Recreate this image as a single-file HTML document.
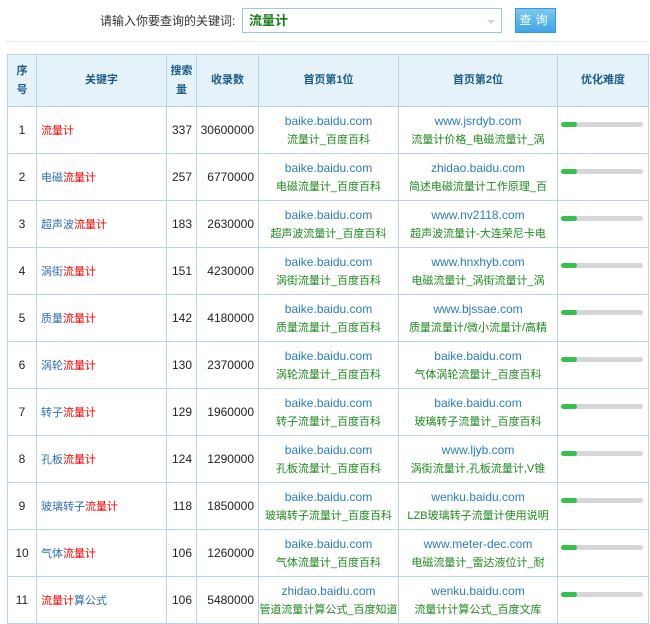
<!DOCTYPE html>
<html><head><meta charset="utf-8"><style>
body{margin:0;width:650px;height:615px;overflow:hidden;background:#fff;font-family:"Liberation Sans","Noto Sans CJK SC",sans-serif;font-size:12px;color:#222;position:relative}
.lbl{position:absolute;left:100px;top:12px;font-size:12px;color:#333}
.inp{position:absolute;left:242px;top:8px;width:260px;height:25px;border:1px solid #9cc7e4;box-sizing:border-box;font-weight:bold;color:#1a7a1a;font-size:13px;line-height:23px;padding-left:6px}
.inp:after{content:"";position:absolute;right:6px;top:11px;border:4px solid transparent;border-top:4px solid #c8d4dc}
.btn{position:absolute;left:515px;top:8px;width:41px;height:25px;background:linear-gradient(#7cc8f0,#3ea6e4);border:1px solid #3a98d4;box-sizing:border-box;color:#fff;text-align:center;line-height:23px;font-size:12px;letter-spacing:4px}
.hr{position:absolute;left:6px;top:41px;width:642px;height:1px;background:#e4e8ea}
table{position:absolute;left:7px;top:54px;border-collapse:collapse;table-layout:fixed;width:641px}
td,th{border:1px solid #b7d5e6;padding:0}
th{background:#e6f2fa;color:#1a5a8a;font-size:11px;font-weight:bold;height:51px;line-height:19px}
td{height:46px;text-align:center}
td.k{text-align:left;padding-left:4px;color:#2a6fb5;font-size:11px}
.r{color:#f00}
td.n{text-align:right;padding-right:4px}
.u{color:#2a7cc0;font-size:12px;line-height:20px}
.t{color:#1e8a1e;font-size:11px;line-height:18px;white-space:nowrap;overflow:hidden}
.bar{width:82px;height:5px;background:#d6d6d6;border-radius:3px;margin:0 0 0 3px;position:relative;top:-6px}
.bar i{display:block;width:16px;height:5px;background:#33c24d;border-radius:3px}
</style></head><body>
<div class="lbl">请输入你要查询的关键词:</div>
<div class="inp">流量计</div>
<div class="btn">查询</div>
<div class="hr"></div>
<table>
<colgroup><col style="width:29px"><col style="width:130px"><col style="width:30px"><col style="width:62px"><col style="width:140px"><col style="width:159px"><col style="width:91px"></colgroup>
<tr><th>序<br>号</th><th>关键字</th><th>搜索<br>量</th><th>收录数</th><th>首页第1位</th><th>首页第2位</th><th>优化难度</th></tr>
<tr><td>1</td><td class="k"><span class="r">流量计</span></td><td class="n">337</td><td class="n">30600000</td><td><div class="u">baike.baidu.com</div><div class="t">流量计_百度百科</div></td><td><div class="u">www.jsrdyb.com</div><div class="t">流量计价格_电磁流量计_涡</div></td><td><div class="bar"><i></i></div></td></tr>
<tr><td>2</td><td class="k">电磁<span class="r">流量计</span></td><td class="n">257</td><td class="n">6770000</td><td><div class="u">baike.baidu.com</div><div class="t">电磁流量计_百度百科</div></td><td><div class="u">zhidao.baidu.com</div><div class="t">简述电磁流量计工作原理_百</div></td><td><div class="bar"><i></i></div></td></tr>
<tr><td>3</td><td class="k">超声波<span class="r">流量计</span></td><td class="n">183</td><td class="n">2630000</td><td><div class="u">baike.baidu.com</div><div class="t">超声波流量计_百度百科</div></td><td><div class="u">www.nv2118.com</div><div class="t">超声波流量计-大连荣尼卡电</div></td><td><div class="bar"><i></i></div></td></tr>
<tr><td>4</td><td class="k">涡街<span class="r">流量计</span></td><td class="n">151</td><td class="n">4230000</td><td><div class="u">baike.baidu.com</div><div class="t">涡街流量计_百度百科</div></td><td><div class="u">www.hnxhyb.com</div><div class="t">电磁流量计_涡街流量计_涡</div></td><td><div class="bar"><i></i></div></td></tr>
<tr><td>5</td><td class="k">质量<span class="r">流量计</span></td><td class="n">142</td><td class="n">4180000</td><td><div class="u">baike.baidu.com</div><div class="t">质量流量计_百度百科</div></td><td><div class="u">www.bjssae.com</div><div class="t">质量流量计/微小流量计/高精</div></td><td><div class="bar"><i></i></div></td></tr>
<tr><td>6</td><td class="k">涡轮<span class="r">流量计</span></td><td class="n">130</td><td class="n">2370000</td><td><div class="u">baike.baidu.com</div><div class="t">涡轮流量计_百度百科</div></td><td><div class="u">baike.baidu.com</div><div class="t">气体涡轮流量计_百度百科</div></td><td><div class="bar"><i></i></div></td></tr>
<tr><td>7</td><td class="k">转子<span class="r">流量计</span></td><td class="n">129</td><td class="n">1960000</td><td><div class="u">baike.baidu.com</div><div class="t">转子流量计_百度百科</div></td><td><div class="u">baike.baidu.com</div><div class="t">玻璃转子流量计_百度百科</div></td><td><div class="bar"><i></i></div></td></tr>
<tr><td>8</td><td class="k">孔板<span class="r">流量计</span></td><td class="n">124</td><td class="n">1290000</td><td><div class="u">baike.baidu.com</div><div class="t">孔板流量计_百度百科</div></td><td><div class="u">www.ljyb.com</div><div class="t">涡街流量计,孔板流量计,V锥</div></td><td><div class="bar"><i></i></div></td></tr>
<tr><td>9</td><td class="k">玻璃转子<span class="r">流量计</span></td><td class="n">118</td><td class="n">1850000</td><td><div class="u">baike.baidu.com</div><div class="t">玻璃转子流量计_百度百科</div></td><td><div class="u">wenku.baidu.com</div><div class="t">LZB玻璃转子流量计使用说明</div></td><td><div class="bar"><i></i></div></td></tr>
<tr><td>10</td><td class="k">气体<span class="r">流量计</span></td><td class="n">106</td><td class="n">1260000</td><td><div class="u">baike.baidu.com</div><div class="t">气体流量计_百度百科</div></td><td><div class="u">www.meter-dec.com</div><div class="t">电磁流量计_雷达液位计_耐</div></td><td><div class="bar"><i></i></div></td></tr>
<tr><td>11</td><td class="k"><span class="r">流量计</span>算公式</td><td class="n">106</td><td class="n">5480000</td><td><div class="u">zhidao.baidu.com</div><div class="t">管道流量计算公式_百度知道</div></td><td><div class="u">wenku.baidu.com</div><div class="t">流量计计算公式_百度文库</div></td><td><div class="bar"><i></i></div></td></tr>
</table>
</body></html>
